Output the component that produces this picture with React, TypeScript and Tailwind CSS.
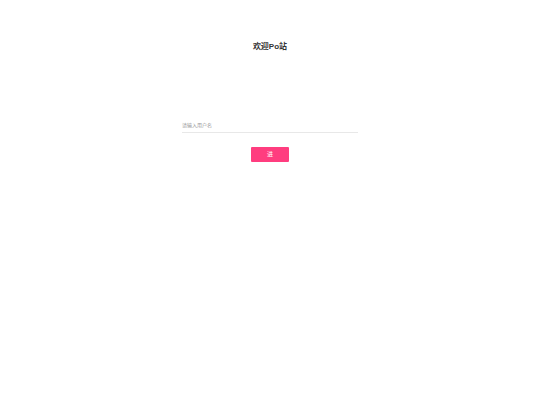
export default function App() {
  return (
    <div className="min-h-screen bg-white flex flex-col items-center font-['Liberation_Sans','Noto_Sans_CJK_SC',sans-serif]">
      <h1 className="mt-[41px] text-[8px] leading-[12px] font-bold text-[#333]">欢迎Po站</h1>
      <div className="mt-[57px] w-[176px]">
        <input
          placeholder="请输入用户名"
          className="w-full h-[14px] border-b border-[#e8e8e8] text-[5px] leading-[8px] text-[#333] outline-none placeholder:text-[#999] bg-transparent"
        />
      </div>
      <button className="mt-[13px] w-[38px] h-[15px] bg-[#ff3d7f] text-white text-[6px] rounded-[1px]">进</button>
    </div>
  );
}
